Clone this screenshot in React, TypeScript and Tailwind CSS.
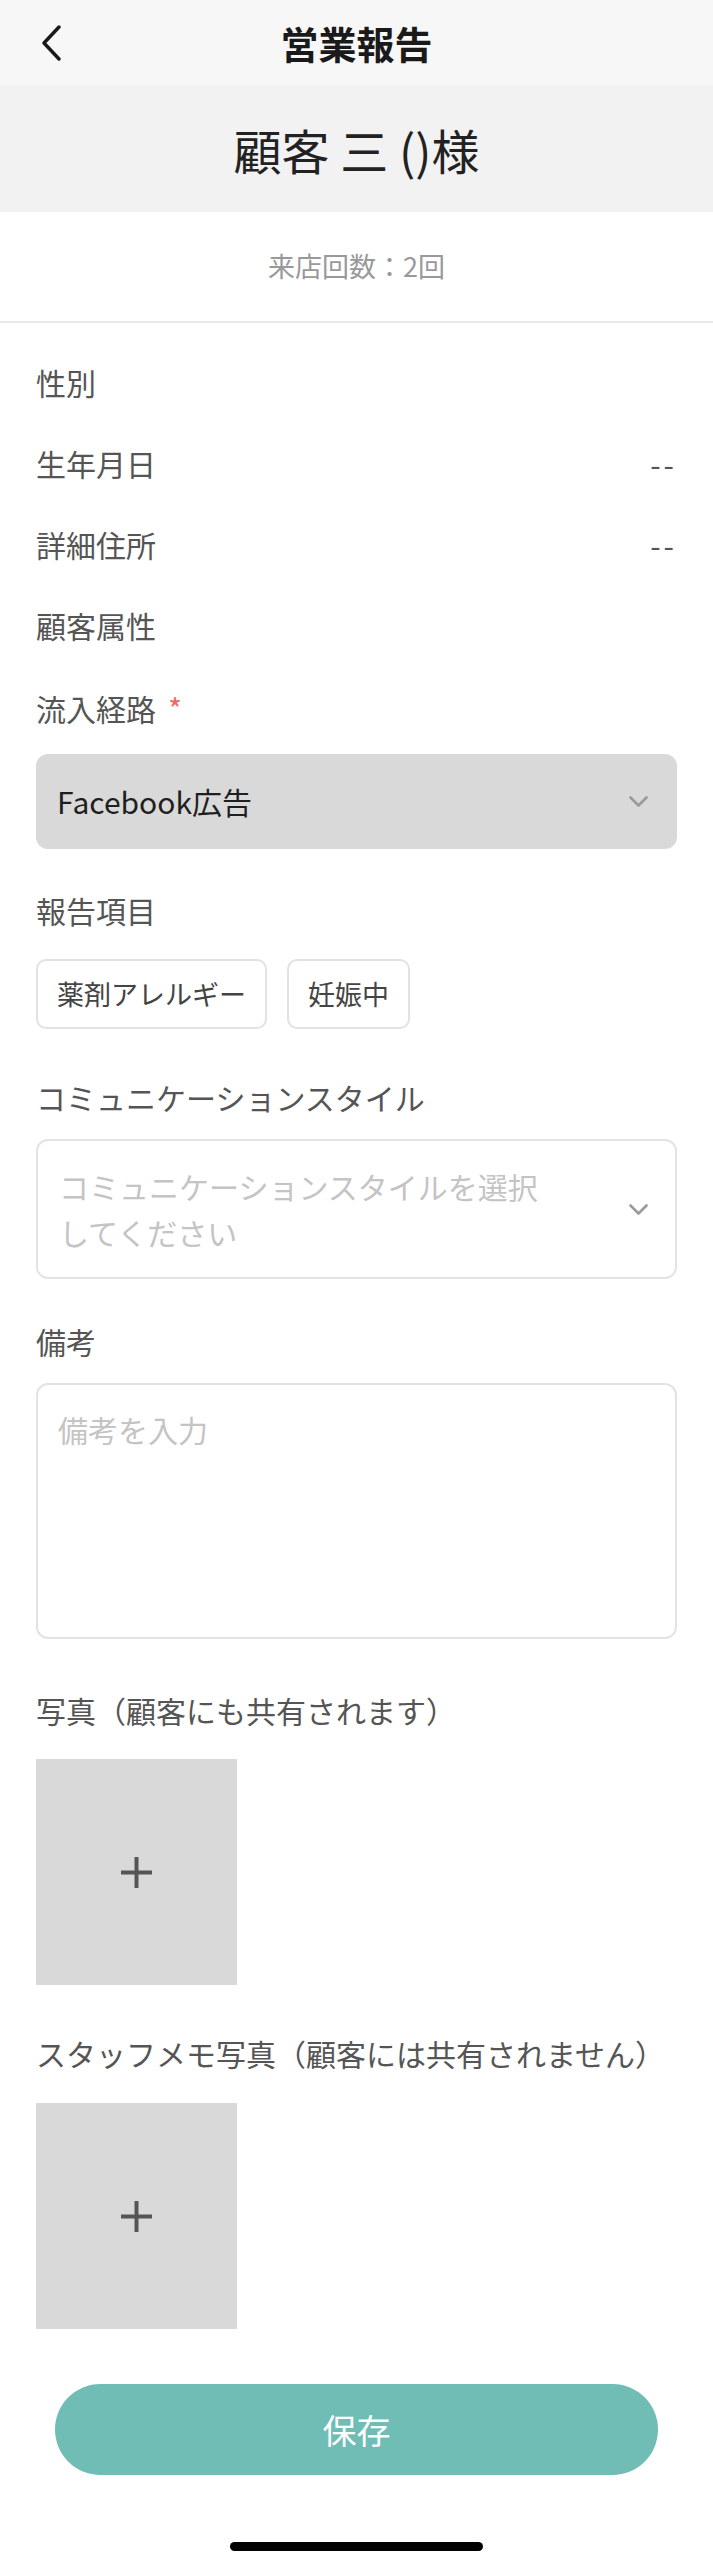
import React from 'react';

// ─── Small pieces ─────────────────────────────────────────────────────────────

function Chevron({ className = '' }: { className?: string }) {
  return (
    <svg width="19" height="11" viewBox="0 0 19 11" fill="none" className={className}>
      <path d="M1.5 1.5 L9.5 9.5 L17.5 1.5" stroke="#9a9a9a" strokeWidth="2.6" strokeLinecap="round" strokeLinejoin="round" />
    </svg>
  );
}

function PhotoSlot() {
  return (
    <button className="w-[201px] h-[226px] bg-[#d9d9d9] flex items-center justify-center">
      <svg width="33" height="33" viewBox="0 0 33 33">
        <path d="M16.5 1 V32 M1 16.5 H32" stroke="#555555" strokeWidth="4" />
      </svg>
    </button>
  );
}

function InfoRow({ label, value }: { label: string; value?: string }) {
  return (
    <div className="h-[81px] flex items-center justify-between">
      <span className="text-[30px] text-[#555]">{label}</span>
      {value && <span className="text-[30px] text-[#555] tracking-[3px]">{value}</span>}
    </div>
  );
}

function SectionLabel({ children, className = '' }: { children: React.ReactNode; className?: string }) {
  return (
    <div className={`h-[44px] flex items-center text-[30px] text-[#555] whitespace-nowrap ${className}`}>
      {children}
    </div>
  );
}

function Chip({ children }: { children: React.ReactNode }) {
  return (
    <span className="h-[70px] px-[19px] border-2 border-[#e2e2e2] rounded-[10px] flex items-center text-[27px] text-[#444]">
      {children}
    </span>
  );
}

// ─── Page ─────────────────────────────────────────────────────────────────────

export default function App() {
  return (
    <div
      className="w-[713px] min-h-[2560px] bg-white flex flex-col"
      style={{ fontFamily: '"Noto Sans CJK JP", "Noto Sans", sans-serif' }}
    >
      {/* Nav bar */}
      <header className="h-[85px] bg-[#f7f7f7] grid grid-cols-[100px_1fr_100px] items-center">
        <button className="pl-[41px] flex items-center">
          <svg width="21" height="36" viewBox="0 0 21 36" fill="none">
            <path d="M18 2 L3 18 L18 34" stroke="#1a1a1a" strokeWidth="3.4" strokeLinecap="round" strokeLinejoin="round" />
          </svg>
        </button>
        <h1 className="text-center text-[38px] font-bold text-[#1a1a1a] leading-none">営業報告</h1>
        <div />
      </header>

      {/* Customer name */}
      <div className="h-[127px] bg-[#f2f2f2] flex items-center justify-center">
        <p className="text-[48px] text-[#222] leading-none">顧客 三 ()様</p>
      </div>

      <div className="h-[109px] flex items-center justify-center">
        <p className="text-[27px] text-[#999]">来店回数：2回</p>
      </div>

      <div className="h-[2px] bg-[#e8e8e8]" />

      {/* Form */}
      <div className="px-[36px] pt-[19px] flex flex-col">
        <InfoRow label="性別" />
        <InfoRow label="生年月日" value="--" />
        <InfoRow label="詳細住所" value="--" />
        <InfoRow label="顧客属性" />

        <SectionLabel className="mt-[20px]">
          流入経路<span className="ml-[12px] text-[#f06767] text-[30px]">*</span>
        </SectionLabel>
        <div className="mt-[24px] h-[95px] bg-[#d9d9d9] rounded-[12px] pl-[21px] pr-[29px] flex items-center justify-between">
          <span className="text-[30px] text-[#1f1f1f]">Facebook広告</span>
          <Chevron />
        </div>

        <SectionLabel className="mt-[39px]">報告項目</SectionLabel>
        <div className="mt-[27px] flex gap-[20px]">
          <Chip>薬剤アレルギー</Chip>
          <Chip>妊娠中</Chip>
        </div>

        <SectionLabel className="mt-[46px]">コミュニケーションスタイル</SectionLabel>
        <div className="mt-[20px] h-[140px] border-2 border-[#e3e3e3] rounded-[12px] pl-[21px] pr-[27px] flex items-center justify-between">
          <span className="text-[30px] leading-[46px] text-[#c4c4c4]">
            コミュニケーションスタイルを選択
            <br />
            してください
          </span>
          <Chevron />
        </div>

        <SectionLabel className="mt-[40px]">備考</SectionLabel>
        <textarea
          placeholder="備考を入力"
          className="mt-[20px] block w-full h-[256px] border-2 border-[#e3e3e3] rounded-[12px] px-[20px] pt-[22px] text-[30px] leading-[45px] resize-none outline-none placeholder:text-[#c4c4c4]"
        />

        <SectionLabel className="mt-[49px]">写真（顧客にも共有されます）</SectionLabel>
        <div className="mt-[27px]">
          <PhotoSlot />
        </div>

        <SectionLabel className="mt-[46px]">スタッフメモ写真（顧客には共有されません）</SectionLabel>
        <div className="mt-[28px]">
          <PhotoSlot />
        </div>
      </div>

      {/* Save */}
      <div className="px-[55px] mt-[55px]">
        <button className="w-full h-[91px] rounded-full bg-[#70bdb5] text-white text-[34px]">保存</button>
      </div>

      {/* Home indicator */}
      <div className="mt-[67px] flex justify-center">
        <div className="w-[253px] h-[9px] rounded-full bg-black" />
      </div>
    </div>
  );
}
